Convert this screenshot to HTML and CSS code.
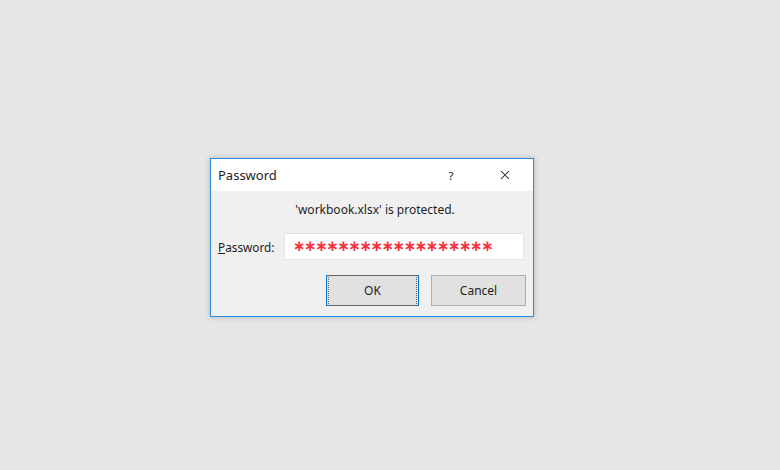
FILE: index.html
```html
<!DOCTYPE html>
<html>
<head>
<meta charset="utf-8">
<link rel="stylesheet" href="styles.css">
</head>
<body>
<div class="dialog">
  <div class="titlebar">
    <span class="title">Password</span>
    <span class="help">?</span>
    <span class="close">
      <svg width="10" height="10" viewBox="0 0 10 10"><path d="M1 1 L9 9 M9 1 L1 9" stroke="#222" stroke-width="1.05" fill="none"/></svg>
    </span>
  </div>
  <div class="body">
    <div class="message">'workbook.xlsx' is protected.</div>
    <div class="row">
      <label class="label"><u>P</u>assword:</label>
      <div class="input"><span class="stars">∗∗∗∗∗∗∗∗∗∗∗∗∗∗∗∗∗∗</span></div>
    </div>
    <div class="buttons">
      <div class="btn btn-default"><span class="focus">OK</span></div>
      <div class="btn">Cancel</div>
    </div>
  </div>
</div>
</body>
</html>
```
FILE: styles.css
```css
html, body {
  margin: 0;
  padding: 0;
}
body {
  background: #e6e6e6;
  width: 780px;
  height: 470px;
  overflow: hidden;
  font-family: "Noto Sans", "Open Sans", sans-serif;
  color: #1e1e1e;
}
.dialog {
  margin: 158px 0 0 210px;
  width: 322px;
  height: 157px;
  border: 1px solid #2b8ce0;
  background: #f0f0f0;
  box-shadow: 0 0 5px 1px rgba(0,0,0,0.16);
  display: flex;
  flex-direction: column;
}
.titlebar {
  height: 32px;
  background: #ffffff;
  display: flex;
  align-items: center;
  padding-left: 7px;
}
.title {
  font-size: 13px;
  flex: 1;
  color: #1e1e1e;
}
.help {
  font-size: 11.5px;
  width: 10px;
  margin-right: 44px;
  text-align: center;
}
.close {
  display: flex;
  width: 10px;
  margin-right: 23px;
}
.body {
  flex: 1;
  display: flex;
  flex-direction: column;
  padding: 0 7px 0 7px;
}
.message {
  font-size: 12px;
  text-align: center;
  margin-top: 10px;
  height: 18px;
  line-height: 18px;
  padding-left: 6px;
}
.row {
  display: flex;
  align-items: center;
  margin-top: 14px;
  height: 27px;
}
.label {
  font-size: 11.8px;
  width: 66px;
}
.input {
  width: 230px;
  height: 25px;
  background: #fff;
  border: 1px solid #e3e3e3;
  display: flex;
  align-items: center;
  padding-left: 8px;
  box-sizing: content-box;
  overflow: hidden;
}
.stars {
  font-family: "DejaVu Sans", sans-serif;
  font-weight: bold;
  font-size: 15px;
  letter-spacing: -1.5px;
  color: #f5333f;
  line-height: 25px;
  height: 25px;
  display: block;
  white-space: nowrap;
}
.buttons {
  display: flex;
  justify-content: flex-end;
  gap: 12px;
  margin-top: 15px;
}
.btn {
  width: 93px;
  height: 29px;
  background: #e1e1e1;
  border: 1px solid #adadad;
  font-size: 12px;
  display: flex;
  align-items: center;
  justify-content: center;
  box-sizing: content-box;
}
.btn-default {
  border-color: #0078d7;
  width: 91px;
}
.focus {
  width: 100%;
  height: 100%;
  margin: 1px;
  border: 1px dotted #6a6a6a;
  display: flex;
  align-items: center;
  justify-content: center;
}
```
